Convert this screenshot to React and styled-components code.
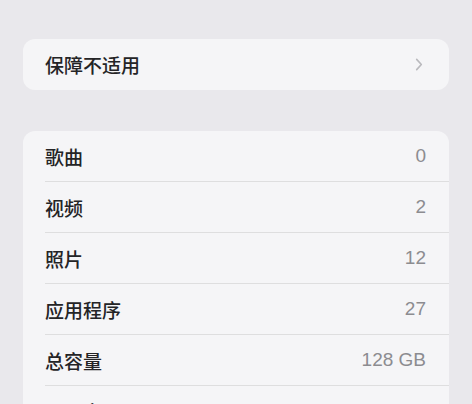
import styled, { createGlobalStyle } from 'styled-components';

const rows = [
  { label: '歌曲', value: '0' },
  { label: '视频', value: '2' },
  { label: '照片', value: '12' },
  { label: '应用程序', value: '27' },
  { label: '总容量', value: '128 GB' },
  { label: '可用容量', value: '97.5 GB' }
];

function App() {
  return (
    <>
      <GlobalStyle />
      <Page>
        <Card>
          <Row>
            <Label>保障不适用</Label>
            <Chevron viewBox="0 0 8 14" aria-hidden="true">
              <path d="M1.5 1.5 L6.5 7 L1.5 12.5" />
            </Chevron>
          </Row>
        </Card>

        <Card>
          {rows.map((row) => (
            <Row key={row.label} $divided>
              <Label>{row.label}</Label>
              <Value>{row.value}</Value>
            </Row>
          ))}
        </Card>
      </Page>
    </>
  );
}

const GlobalStyle = createGlobalStyle`
  html, body {
    margin: 0;
    padding: 0;
    background: #e9e8ec;
    overflow: hidden;
  }
  body {
    font-family: "Liberation Sans", "Noto Sans CJK SC", sans-serif;
    -webkit-font-smoothing: antialiased;
  }
`;

const Page = styled.div`
  height: 404px;
  padding: 39px 23px 0;
  display: flex;
  flex-direction: column;
  gap: 41px;
  box-sizing: border-box;
  overflow: hidden;
`;

const Card = styled.div`
  flex-shrink: 0;
  background: #f5f5f7;
  border-radius: 12px;
  overflow: hidden;
  display: flex;
  flex-direction: column;
`;

const Row = styled.div`
  height: 51px;
  margin-left: 22px;
  padding-right: 23px;
  display: flex;
  align-items: center;
  justify-content: space-between;
  box-sizing: border-box;
  border-bottom: ${(p) => (p.$divided ? '1px solid #dededf' : 'none')};
  flex-shrink: 0;

  &:last-child {
    border-bottom: none;
  }
`;

const Label = styled.span`
  font-size: 19px;
  color: #242426;
  font-weight: 500;
`;

const Value = styled.span`
  font-size: 19px;
  color: #8c8c90;
`;

const Chevron = styled.svg`
  width: 8px;
  height: 13px;
  margin-right: 3px;
  fill: none;
  stroke: #b9b9bd;
  stroke-width: 1.7;
  stroke-linecap: round;
  stroke-linejoin: round;
`;

export default App;
